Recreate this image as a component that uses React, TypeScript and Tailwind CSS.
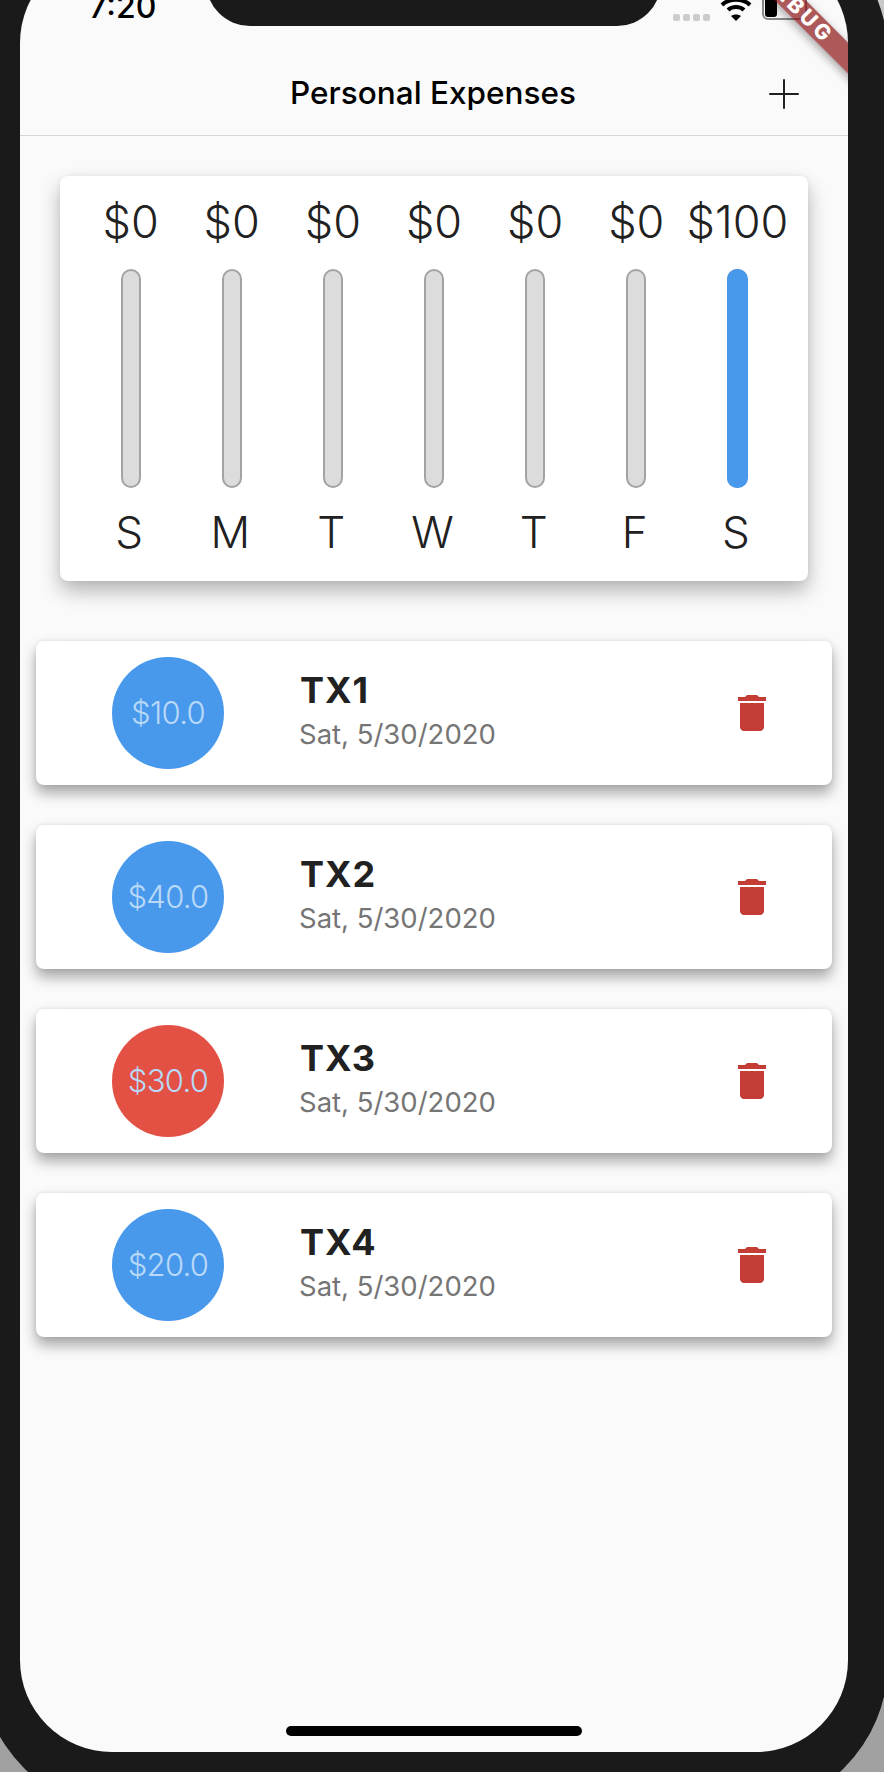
import { Plus } from "lucide-react";

const days = [
  { label: "S", amount: 0 },
  { label: "M", amount: 0 },
  { label: "T", amount: 0 },
  { label: "W", amount: 0 },
  { label: "T", amount: 0 },
  { label: "F", amount: 0 },
  { label: "S", amount: 100 },
];

const txs = [
  { id: "TX1", amount: "$10.0", color: "bg-[#4899ec]" },
  { id: "TX2", amount: "$40.0", color: "bg-[#4899ec]" },
  { id: "TX3", amount: "$30.0", color: "bg-[#e35144]" },
  { id: "TX4", amount: "$20.0", color: "bg-[#4899ec]" },
];

function StatusBar() {
  return (
    <div className="relative h-[101px] shrink-0">
      {/* Notch */}
      <div className="absolute left-[186px] top-0 h-[75px] w-[455px] rounded-b-[44px] bg-[#1a1a1a]" />
      <div className="flex h-[70px] items-end pl-[69px] pr-[41px]">
        <span className="text-[32px] font-medium leading-[28px] text-black">7:20</span>
        <div className="ml-auto flex items-end">
          <div className="mr-[10px] flex gap-[3px]">
            <span className="h-[7px] w-[7px] rounded-[2px] bg-[#cccccc]" />
            <span className="h-[7px] w-[7px] rounded-[2px] bg-[#cccccc]" />
            <span className="h-[7px] w-[7px] rounded-[2px] bg-[#cccccc]" />
            <span className="h-[7px] w-[7px] rounded-[2px] bg-[#cccccc]" />
          </div>
          <svg width="32" height="26" viewBox="0 0 32 26" className="mr-[10px]">
            <path d="M2 10 C9 3 23 3 30 10" fill="none" stroke="#000" strokeWidth="4" />
            <path d="M8 15 C12 11 20 11 24 15" fill="none" stroke="#000" strokeWidth="4" />
            <path d="M16 26 L11 21 C14 19 18 19 21 21 Z" fill="#000" />
          </svg>
          <div className="mb-[1px] flex h-[30px] w-[45px] items-stretch rounded-[6px] border-2 border-[#888888] p-[1px]">
            <div className="w-[12px] rounded-[3px] bg-black" />
          </div>
        </div>
      </div>
    </div>
  );
}

function Chart() {
  return (
    <div className="mx-10 mt-[40px] grid grid-cols-7 rounded-[8px] bg-white px-5 pb-[25px] pt-[22px] shadow-[0_10px_20px_rgba(0,0,0,0.28),0_0_5px_rgba(0,0,0,0.06)]">
      {days.map((d, i) => (
        <div key={i} className="flex flex-col items-center text-[#212121]">
          <span className="h-[48px] text-[45px] font-[350] leading-[48px]">${d.amount}</span>
          <div className="relative mt-[23px] h-[219px] w-[20px] rounded-[10px] border-2 border-[#a3a3a3] bg-[#dcdcdc]">
            {d.amount > 0 && (
              <div
                className="absolute -bottom-[2px] -left-[2px] -right-[3px] rounded-[10px] bg-[#4899ec]"
                style={{ height: `${(d.amount / 100) * 219}px` }}
              />
            )}
          </div>
          <span className="mt-[20px] h-[48px] pr-[3px] text-[44px] font-[350] leading-[48px]">{d.label}</span>
        </div>
      ))}
    </div>
  );
}

function TxCard({ id, amount, color }: { id: string; amount: string; color: string }) {
  return (
    <div className="flex h-[144px] items-center rounded-[8px] bg-white pl-[76px] pr-[56px] shadow-[0_8px_14px_rgba(0,0,0,0.34),0_0_4px_rgba(0,0,0,0.08)]">
      <div className={`flex h-[112px] w-[112px] shrink-0 items-center justify-center rounded-full ${color}`}>
        <span className="text-[31px] font-light tracking-[-0.7px] text-[#b9d9f8]">{amount}</span>
      </div>
      <div className="ml-[76px] flex-1 pb-[2px]">
        <div className="text-[36px] font-bold leading-[36px] tracking-[1px] text-[#212121]">{id}</div>
        <div className="-ml-[1px] mt-[8px] text-[27.5px] leading-[36px] text-[#757575]">Sat, 5/30/2020</div>
      </div>
      <svg width="48" height="48" viewBox="0 0 24 24" fill="#c43c36">
        <path d="M6 19c0 1.1.9 2 2 2h8c1.1 0 2-.9 2-2V7H6v12zM19 4h-3.5l-1-1h-5l-1 1H5v2h14V4z" />
      </svg>
    </div>
  );
}

export default function App() {
  return (
    <div className="relative h-[1772px] w-[884px] overflow-hidden bg-gradient-to-b from-[#c8c8c8] to-[#a0a0a0] font-['Inter',sans-serif]">
      {/* Phone body */}
      <div className="-ml-[20px] -mt-[95px] h-[1907px] w-[908px] rounded-[150px] bg-[#1a1a1a] pl-[40px] pr-[40px] pt-[46px]">
        {/* Screen */}
        <div className="relative flex h-[1801px] flex-col overflow-hidden rounded-[92px] bg-[#fafafa]">
          <StatusBar />

          {/* App bar */}
          <div className="flex h-[84px] shrink-0 items-center justify-center border-b border-[#d6d6d6]">
            <h1 className="-ml-[2px] -mt-[2px] text-[31.5px] font-medium leading-none text-black">Personal Expenses</h1>
            <Plus size={48} strokeWidth={1} color="#212121" className="absolute right-[40px]" />
          </div>

          <Chart />

          <div className="mt-[60px] flex flex-col gap-[40px] px-4">
            {txs.map((t) => (
              <TxCard key={t.id} {...t} />
            ))}
          </div>

          <div className="absolute bottom-[16px] left-[266px] h-[10px] w-[296px] rounded-full bg-black" />

          {/* Debug banner */}
          <div className="absolute left-[678px] top-[46px] flex h-[22px] w-[200px] rotate-45 items-center justify-center bg-[rgba(140,20,20,0.7)] text-[21px] font-extrabold tracking-[3.5px] text-white shadow-[0_3px_10px_rgba(0,0,0,0.35)]">
            DEBUG
          </div>
        </div>
      </div>
    </div>
  );
}
